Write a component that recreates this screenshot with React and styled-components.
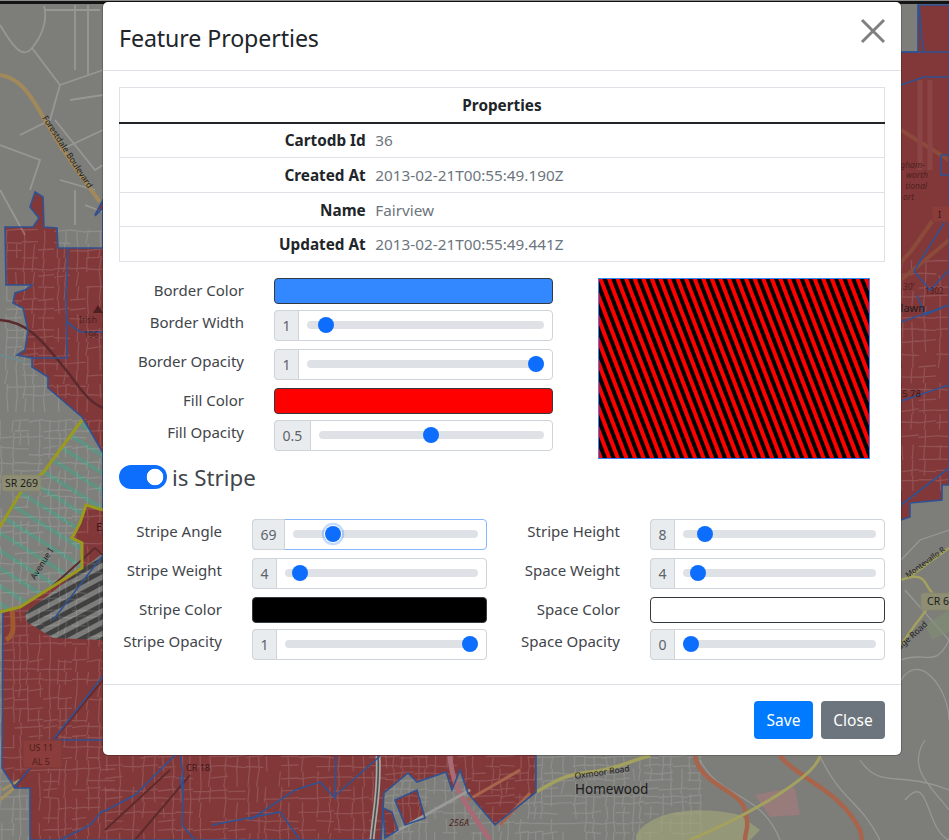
import React from 'react';
import styled, { createGlobalStyle, css } from 'styled-components';

const GlobalStyle = createGlobalStyle`
  html, body { margin: 0; padding: 0; background: #7b7b78; }
  body { font-family: "Noto Sans", "Open Sans", Arial, sans-serif; font-size: 16px; line-height: 24px; color: #212529; }
  * { box-sizing: border-box; }
`;

const Page = styled.div`
  position: relative;
  width: 949px;
  height: 840px;
  overflow: hidden;
  padding: 2px 48px 0 103px;
`;

const MapLayer = styled.svg`
  position: absolute;
  inset: 0;
  display: block;
`;

const Modal = styled.section`
  position: relative;
  width: 798px;
  height: 753px;
  background: #fff;
  border-radius: 5px;
  box-shadow: 0 0 0 1px rgba(0, 0, 0, 0.2);
  display: flex;
  flex-direction: column;
`;

const Header = styled.header`
  display: flex;
  justify-content: space-between;
  align-items: flex-start;
  height: 69px;
  padding: 16px;
  border-bottom: 1px solid #dee2e6;
`;

const Title = styled.h5`
  margin: 2px 0 0;
  font-size: 23.2px;
  line-height: 36px;
  font-weight: 400;
  letter-spacing: -0.1px;
`;

const CloseX = styled.button`
  width: 26px;
  height: 26px;
  padding: 0;
  margin: 0 -1px 0 0;
  border: 0;
  background: none;
  display: block;
  svg { display: block; }
`;

const Body = styled.div`
  padding: 16px;
  flex: 1;
`;

const Table = styled.table`
  width: 100%;
  border-collapse: collapse;
  border: 1px solid #dee2e6;
  margin-bottom: 16px;
  table-layout: fixed;
  font-size: 15.3px;
`;

const KeyColumn = styled.col`
  width: 251px;
`;

const HeadCell = styled.th`
  padding: 4.8px;
  text-align: center;
  font-weight: 700;
  border-bottom: 2px solid #212529;
`;

const KeyCell = styled.th`
  padding: 4.8px;
  text-align: right;
  font-weight: 700;
  border-top: 1px solid #dee2e6;
`;

const ValueCell = styled.td`
  padding: 4.8px;
  text-align: left;
  color: #6c757d;
  border-top: 1px solid #dee2e6;
`;

const TopSection = styled.div`
  display: flex;
  gap: 45px;
  align-items: flex-start;
`;

const FieldStack = styled.div`
  width: 434px;
  flex: none;
`;

const Field = styled.div`
  display: grid;
  grid-template-columns: ${p => p.$label}px 1fr;
  column-gap: 30px;
  align-items: start;
`;

const Label = styled.label`
  text-align: right;
  font-size: 15px;
  line-height: 24px;
  color: #3f454b;
  white-space: nowrap;
`;

const Swatch = styled.div`
  height: 26px;
  margin-bottom: 6px;
  border: 1px solid #343a40;
  border-radius: 4px;
  background: ${p => p.$color};
`;

const SliderGroup = styled.div`
  display: flex;
  align-items: center;
  height: 31px;
  margin-bottom: 8px;
  border: 1px solid #ced4da;
  border-radius: 4px;
  ${p => p.$focused && css`border-color: #86b7fe;`}
`;

const Addon = styled.span`
  display: flex;
  align-items: center;
  align-self: stretch;
  padding: 2px 7.5px 0;
  font-size: 14px;
  color: #5c636a;
  background: #e9ecef;
  margin: -1px 0 -1px -1px;
  border: 1px solid #ced4da;
  border-radius: 4px 0 0 4px;
`;

const Range = styled.input.attrs({ type: 'range' })`
  appearance: none;
  -webkit-appearance: none;
  flex: 1;
  min-width: 0;
  height: 16px;
  margin: 0 8px 1px 8px;
  padding: 0;
  background: transparent;
  &::-webkit-slider-runnable-track {
    height: 8px;
    border-radius: 4px;
    background: #dee2e6;
  }
  &::-webkit-slider-thumb {
    -webkit-appearance: none;
    width: 16px;
    height: 16px;
    margin-top: -4px;
    border-radius: 50%;
    background: #0d6efd;
    ${p => p.$focused && css`box-shadow: 0 0 0 1px #fff, 0 0 0 3.2px rgba(13, 110, 253, 0.25);`}
  }
`;

const Preview = styled.svg`
  flex: none;
  display: block;
`;

const SwitchRow = styled.div`
  display: flex;
  align-items: center;
  gap: 5px;
  height: 24px;
  margin: 6px 0 30px;
`;

const SwitchInput = styled.input.attrs({ type: 'checkbox' })`
  appearance: none;
  -webkit-appearance: none;
  width: 48px;
  height: 24px;
  margin: 0;
  border-radius: 12px;
  background: #0d6efd radial-gradient(circle at 36px 12px, #fff 8px, transparent 8.6px);
`;

const SwitchLabel = styled.label`
  font-size: 22.3px;
  line-height: 30px;
  padding-top: 3px;
  color: #3f454b;
`;

const StripeGrid = styled.div`
  display: grid;
  grid-template-columns: 368px 368px;
  column-gap: 30px;
`;

const Footer = styled.footer`
  display: flex;
  justify-content: flex-end;
  gap: 8px;
  padding: 16px;
  border-top: 1px solid #dee2e6;
`;

const Button = styled.button`
  height: 38px;
  width: ${p => p.$width}px;
  padding: 0;
  border: 0;
  border-radius: 4px;
  font: inherit;
  font-size: 15.5px;
  color: #fff;
  background: ${p => p.$bg};
`;

const props = [
  ['Cartodb Id', '36'],
  ['Created At', '2013-02-21T00:55:49.190Z'],
  ['Name', 'Fairview'],
  ['Updated At', '2013-02-21T00:55:49.441Z'],
];

const SliderField = ({ label, value, min = 0, max = 1, step = 1, focused, labelWidth = 125 }) => (
  <Field $label={labelWidth}>
    <Label>{label}</Label>
    <SliderGroup $focused={focused}>
      <Addon>{value}</Addon>
      <Range $focused={focused} min={min} max={max} step={step} defaultValue={value} />
    </SliderGroup>
  </Field>
);

const ColorField = ({ label, color, labelWidth = 125 }) => (
  <Field $label={labelWidth}>
    <Label>{label}</Label>
    <Swatch $color={color} />
  </Field>
);

/* Deterministic, slightly irregular street mesh for the map background. */
const streets = (x0, y0, x1, y1, step, seed) => {
  let s = seed;
  const rnd = () => {
    s = (s * 16807) % 2147483647;
    return s / 2147483647;
  };
  let d = '';
  for (let x = x0; x < x1; x += step * (0.7 + rnd() * 0.7)) {
    for (let y = y0; y < y1; y += step * 1.4) {
      if (rnd() < 0.8) d += `M${(x + rnd() * 2).toFixed(1)} ${y.toFixed(1)}L${(x + rnd() * 3 - 1).toFixed(1)} ${(y + step * 1.4).toFixed(1)}`;
    }
  }
  for (let y = y0; y < y1; y += step * (0.7 + rnd() * 0.6)) {
    for (let x = x0; x < x1; x += step * 1.6) {
      if (rnd() < 0.7) d += `M${x.toFixed(1)} ${(y + rnd() * 2).toFixed(1)}L${(x + step * 1.6).toFixed(1)} ${(y + rnd() * 3 - 1).toFixed(1)}`;
    }
  }
  return d;
};

const bigRed =
  'M35 192L43 197 44 227 57 228 58 248 103 248 103 200 901 52 918 52 918 5 949 5 949 485 942 485 942 500 910 503 910 517 901 520 600 640 536 755 536 792 495 825 478 805 468 793 460 770 452 790 446 772 417 782 408 773 384 793 381 840 30 840 30 788 15 788 2 768 3 612 20 607 82 568 82 543 72 538 80 523 86 505 103 510 103 453 88 427 82 417 48 388 48 377 32 367 32 358 17 355 25 350 28 330 23 308 13 303 15 293 25 290 32 285 6 285 5 227 33 227 39 218 30 207Z';
const yellowPoly = 'M82 420L43 473 25 485 0 527V612L20 607 82 568V543L72 538 80 523 86 505 103 510V453L88 427Z';
const islands = 'M395 800L417 790 425 818 405 825ZM383 808L392 812 398 830 385 838Z';

const MapBackground = () => (
  <MapLayer width="949" height="840" viewBox="0 0 949 840">
    <defs>
      <pattern id="greenHatch" width="16" height="15" patternUnits="userSpaceOnUse" patternTransform="rotate(32)">
        <rect width="16" height="4" fill="#5a9583" fillOpacity="0.85" />
      </pattern>
      <pattern id="grayHatch" width="12" height="10" patternUnits="userSpaceOnUse" patternTransform="rotate(-28)">
        <rect width="12" height="10" fill="#7c7c7a" />
        <rect width="12" height="5" fill="#3f403f" />
      </pattern>
    </defs>
    <rect width="949" height="840" fill="#7d7d7a" />
    <path d={bigRed} fill="#823839" />
    <path d={islands} fill="#823839" />
    <path d="M95 215L103 200V208L95 216Z" fill="#823839" />

    {/* hatched polygons */}
    <path d={yellowPoly} fill="#7f7f7c" />
    <path d={yellowPoly} fill="url(#greenHatch)" />
    <path d="M25 613L103 553V640L53 638 27 622Z" fill="url(#grayHatch)" />

    {/* street network */}
    <g fill="none" stroke="#fff" strokeOpacity="0.13" strokeWidth="1.3">
      <path d={streets(6, 230, 103, 405, 10, 11)} />
      <path d={streets(0, 420, 103, 840, 9, 23)} />
      <path d={streets(105, 756, 380, 840, 11, 37)} />
      <path d={streets(385, 756, 700, 840, 9, 41)} />
      <path d={streets(901, 260, 949, 480, 11, 53)} />
      <path d="M0 25C12 45 22 60 32 48S48 20 44 6M32 48L60 85 103 70M45 10H100M75 5V70M88 5V75M60 85L50 120 20 135M0 145L40 160 30 190M55 120L95 170 103 165M70 100L103 95M60 150L103 130M60 180L95 190M0 190L25 235M75 190V225M85 205L103 212" strokeWidth="1.8" strokeOpacity="0.2" />
      <path d="M901 560L920 540 949 530M905 590L949 640M901 660C925 650 935 670 949 640M901 680C920 650 949 690 949 720M925 740C905 770 935 790 949 810M905 800C930 770 925 830 949 840M700 760C720 800 760 790 780 840M820 756C840 800 860 800 880 840M860 760C880 790 900 770 949 790" strokeOpacity="0.2" />
    </g>

    {/* parks */}
    <g fillOpacity="0.6">
      <path d="M636 835C650 810 700 805 740 815L760 830 750 840H636Z" fill="#a5a878" />
      <path d="M755 795L795 787 800 815 770 817Z" fill="#a87c7c" />
      <path d="M925 625C935 618 945 612 949 610V632L932 640Z" fill="#7f8f70" />
    </g>

    {/* roads */}
    <g fill="none">
      <path d="M0 75C18 78 28 90 42 115S80 175 100 202" stroke="#a0895b" strokeWidth="4" />
      <path d="M0 320C30 322 45 345 62 365S85 400 103 408" stroke="#5a2a2d" strokeWidth="2.5" />
      <path d="M0 355L25 362" stroke="#6d8a8c" strokeWidth="2" />
      <path d="M103 555L95 548 48 590" stroke="#5a2c2c" strokeWidth="2" />
      <path d="M12 610C14 630 14 635 6 640" stroke="#a05a32" strokeWidth="5" />
      <path d="M2 790L20 780M0 800L14 788" stroke="#a08f60" strokeWidth="3" />
      <path d="M14 788L103 680" stroke="#6b2a2a" strokeWidth="2" />
      <path d="M378 756C380 790 374 815 372 840" stroke="#a9a9a7" strokeWidth="5" />
      <path d="M378 756C380 790 374 815 372 840" stroke="#4c4c4a" strokeWidth="1.6" />
      <path d="M536 792C550 785 560 775 590 772S630 760 650 756" stroke="#a3a15e" strokeWidth="3.5" />
      <path d="M450 756C452 790 470 810 490 840" stroke="#a86a75" strokeWidth="5" />
      <path d="M695 756C700 785 740 790 745 810S745 830 745 840" stroke="#a8654c" strokeWidth="4.5" />
      <path d="M780 756C800 780 840 790 860 830L862 840" stroke="#a8654c" strokeWidth="4.5" />
      <path d="M820 756C815 775 760 810 690 840" stroke="#a3a15e" strokeWidth="3" />
      <path d="M468 800L520 770M500 825L530 793" stroke="#a8654c" strokeWidth="3" />
      <path d="M395 832L470 790" stroke="#9a9a98" strokeWidth="3" />
      <path d="M901 580C925 570 925 585 930 590S935 600 915 625L901 645" stroke="#a3a15e" strokeWidth="2.5" />
      <path d="M908 578L949 548" stroke="#a3a15e" strokeWidth="2.5" />
      <path d="M135 840L190 775M105 830L170 770" stroke="#5e2a2c" strokeWidth="2" />
      <path d="M901 130L949 160M940 210L912 250 901 262M901 280L949 240" stroke="#8c4b3a" strokeWidth="4" />
      <path d="M920 80V170M930 80V170" stroke="#8b4545" strokeWidth="5" />
    </g>

    {/* polygon outlines */}
    <g fill="none" stroke="#2f5293" strokeWidth="1.6">
      <path d={bigRed} />
      <path d={islands} />
      <path d="M95 215L103 200M95 216L103 208" />
      <path d="M68 248L67 285 66 290 67 358 32 358M67 322L80 332 103 332" />
      <path d="M103 555L53 620M103 676L53 740 14 788M53 740H103M60 840L90 825 103 810" />
      <path d="M901 85L924 77 949 77M901 505L949 468M919 5L922 40 924 52M901 52H949M941 155H949M941 155V175H949M914 271L949 215M914 271L930 290 949 270M917 295L925 315 949 305M901 322L949 305M901 401L949 385" />
      <path d="M103 812L135 795 180 750 183 776 183 795 182 825 195 840M183 795L180 776M250 820L295 790 320 782 335 798 336 756M336 795L380 756M300 840L280 812 212 825" />
    </g>
    <path d="M82 420L43 473 25 485 0 527M0 612L20 607 82 568V543L72 538 80 523 86 505 103 510" fill="none" stroke="#9a9a1e" strokeWidth="3" />

    {/* labels */}
    <g fontFamily="Noto Sans, sans-serif" fill="#1c1c1c">
      <text x="42" y="118" fontSize="8.5" transform="rotate(57 42 118)">Forestdale Boulevard</text>
      <text x="79" y="323" fontSize="8.5" fill="#4e1f20">Irish</text>
      <text x="84" y="338" fontSize="8.5" fill="#4e1f20">196</text>
      <path d="M93 313L98 305 103 313Z" fill="#4e1f20" />
      <rect x="2" y="475" width="39" height="16" rx="2" fill="#8d8e74" stroke="#85866b" />
      <text x="5" y="487" fontSize="10.5">SR 269</text>
      <text x="96" y="531" fontSize="11" fill="#3c1718">E</text>
      <text x="35" y="580" fontSize="8.5" transform="rotate(-58 35 580)">Avenue I</text>
      <rect x="23" y="740" width="39" height="28" rx="2" fill="#8a3d3a" stroke="#7a3a38" />
      <text x="29" y="751" fontSize="9" fill="#4e1f20">US 11</text>
      <text x="32" y="765" fontSize="9" fill="#4e1f20">AL 5</text>
      <text x="186" y="771" fontSize="9" fill="#3c1718">CR 18</text>
      <text x="575" y="779" fontSize="8.5" transform="rotate(-8 575 779)">Oxmoor Road</text>
      <text x="575" y="794" fontSize="13.5">Homewood</text>
      <text x="449" y="826" fontSize="9" fontStyle="italic" fill="#4e1f20">256A</text>
      <rect x="921" y="593" width="40" height="17" rx="2" fill="#8d8e74" stroke="#85866b" />
      <text x="927" y="605" fontSize="10.5">CR 6</text>
      <text x="908" y="578" fontSize="7.6" transform="rotate(-36 908 578)">Montevallo R</text>
      <text x="928" y="625" fontSize="8.5" textAnchor="end" transform="rotate(-42 928 625)">Ridge Road</text>
      <text x="925" y="312" fontSize="11" textAnchor="end">lawn</text>
      <text x="921" y="397" fontSize="9.5" textAnchor="end" fill="#3c1718">5 78</text>
      <text x="925" y="168" fontSize="8.5" fontStyle="italic" textAnchor="end" fill="#4e1f20">gham-</text>
      <text x="928" y="178" fontSize="8.5" fontStyle="italic" textAnchor="end" fill="#4e1f20">worth</text>
      <text x="927" y="189" fontSize="8.5" fontStyle="italic" textAnchor="end" fill="#4e1f20">tional</text>
      <text x="914" y="200" fontSize="8.5" fontStyle="italic" textAnchor="end" fill="#4e1f20">ort</text>
      <rect x="932" y="206" width="20" height="16" rx="2" fill="#8a3d3a" stroke="#7a3a38" />
      <text x="938" y="218" fontSize="9.5" fill="#3c1718">I</text>
      <text x="903" y="290" fontSize="8.5" fontStyle="italic" fill="#4e1f20">30'</text>
      <text x="925" y="294" fontSize="8" fill="#4e1f20">1302</text>
    </g>
    <rect width="949" height="1" fill="#8c8c8c" />
    <rect y="1" width="949" height="3" fill="#141414" />
  </MapLayer>
);

const StripePreview = () => (
  <Preview width="272" height="181" viewBox="0 0 272 181">
    <defs>
      <pattern id="previewStripe" width="8" height="8" patternUnits="userSpaceOnUse" patternTransform="rotate(69)">
        <rect width="8" height="8" fill="#f00" />
        <rect width="8" height="4" fill="#000" />
      </pattern>
    </defs>
    <rect width="272" height="181" fill="url(#previewStripe)" />
    <rect x="0.5" y="0.5" width="271" height="180" fill="none" stroke="#3388ff" />
  </Preview>
);

export default function App() {
  return (
    <>
      <GlobalStyle />
      <Page>
        <MapBackground />
        <Modal>
          <Header>
            <Title>Feature Properties</Title>
            <CloseX aria-label="Close">
              <svg width="26" height="26" viewBox="0 0 26 26">
                <path d="M2 2L24 24M24 2L2 24" stroke="#808080" strokeWidth="3" />
              </svg>
            </CloseX>
          </Header>
          <Body>
            <Table>
              <colgroup>
                <KeyColumn />
                <col />
              </colgroup>
              <thead>
                <tr><HeadCell colSpan={2}>Properties</HeadCell></tr>
              </thead>
              <tbody>
                {props.map(([k, v]) => (
                  <tr key={k}>
                    <KeyCell>{k}</KeyCell>
                    <ValueCell>{v}</ValueCell>
                  </tr>
                ))}
              </tbody>
            </Table>
            <TopSection>
              <FieldStack>
                <ColorField label="Border Color" color="#3388ff" />
                <SliderField label="Border Width" value={1} max={20} />
                <SliderField label="Border Opacity" value={1} step={0.1} />
                <ColorField label="Fill Color" color="#ff0000" />
                <SliderField label="Fill Opacity" value={0.5} step={0.1} />
              </FieldStack>
              <StripePreview />
            </TopSection>
            <SwitchRow>
              <SwitchInput defaultChecked id="isStripe" />
              <SwitchLabel htmlFor="isStripe">is Stripe</SwitchLabel>
            </SwitchRow>
            <StripeGrid>
              <SliderField labelWidth={103} label="Stripe Angle" value={69} max={360} focused />
              <SliderField labelWidth={103} label="Stripe Height" value={8} max={100} />
              <SliderField labelWidth={103} label="Stripe Weight" value={4} max={100} />
              <SliderField labelWidth={103} label="Space Weight" value={4} max={100} />
              <ColorField labelWidth={103} label="Stripe Color" color="#000000" />
              <ColorField labelWidth={103} label="Space Color" color="#ffffff" />
              <SliderField labelWidth={103} label="Stripe Opacity" value={1} step={0.1} />
              <SliderField labelWidth={103} label="Space Opacity" value={0} step={0.1} />
            </StripeGrid>
          </Body>
          <Footer>
            <Button $bg="#007bff" $width={59}>Save</Button>
            <Button $bg="#6c757d" $width={64}>Close</Button>
          </Footer>
        </Modal>
      </Page>
    </>
  );
}
